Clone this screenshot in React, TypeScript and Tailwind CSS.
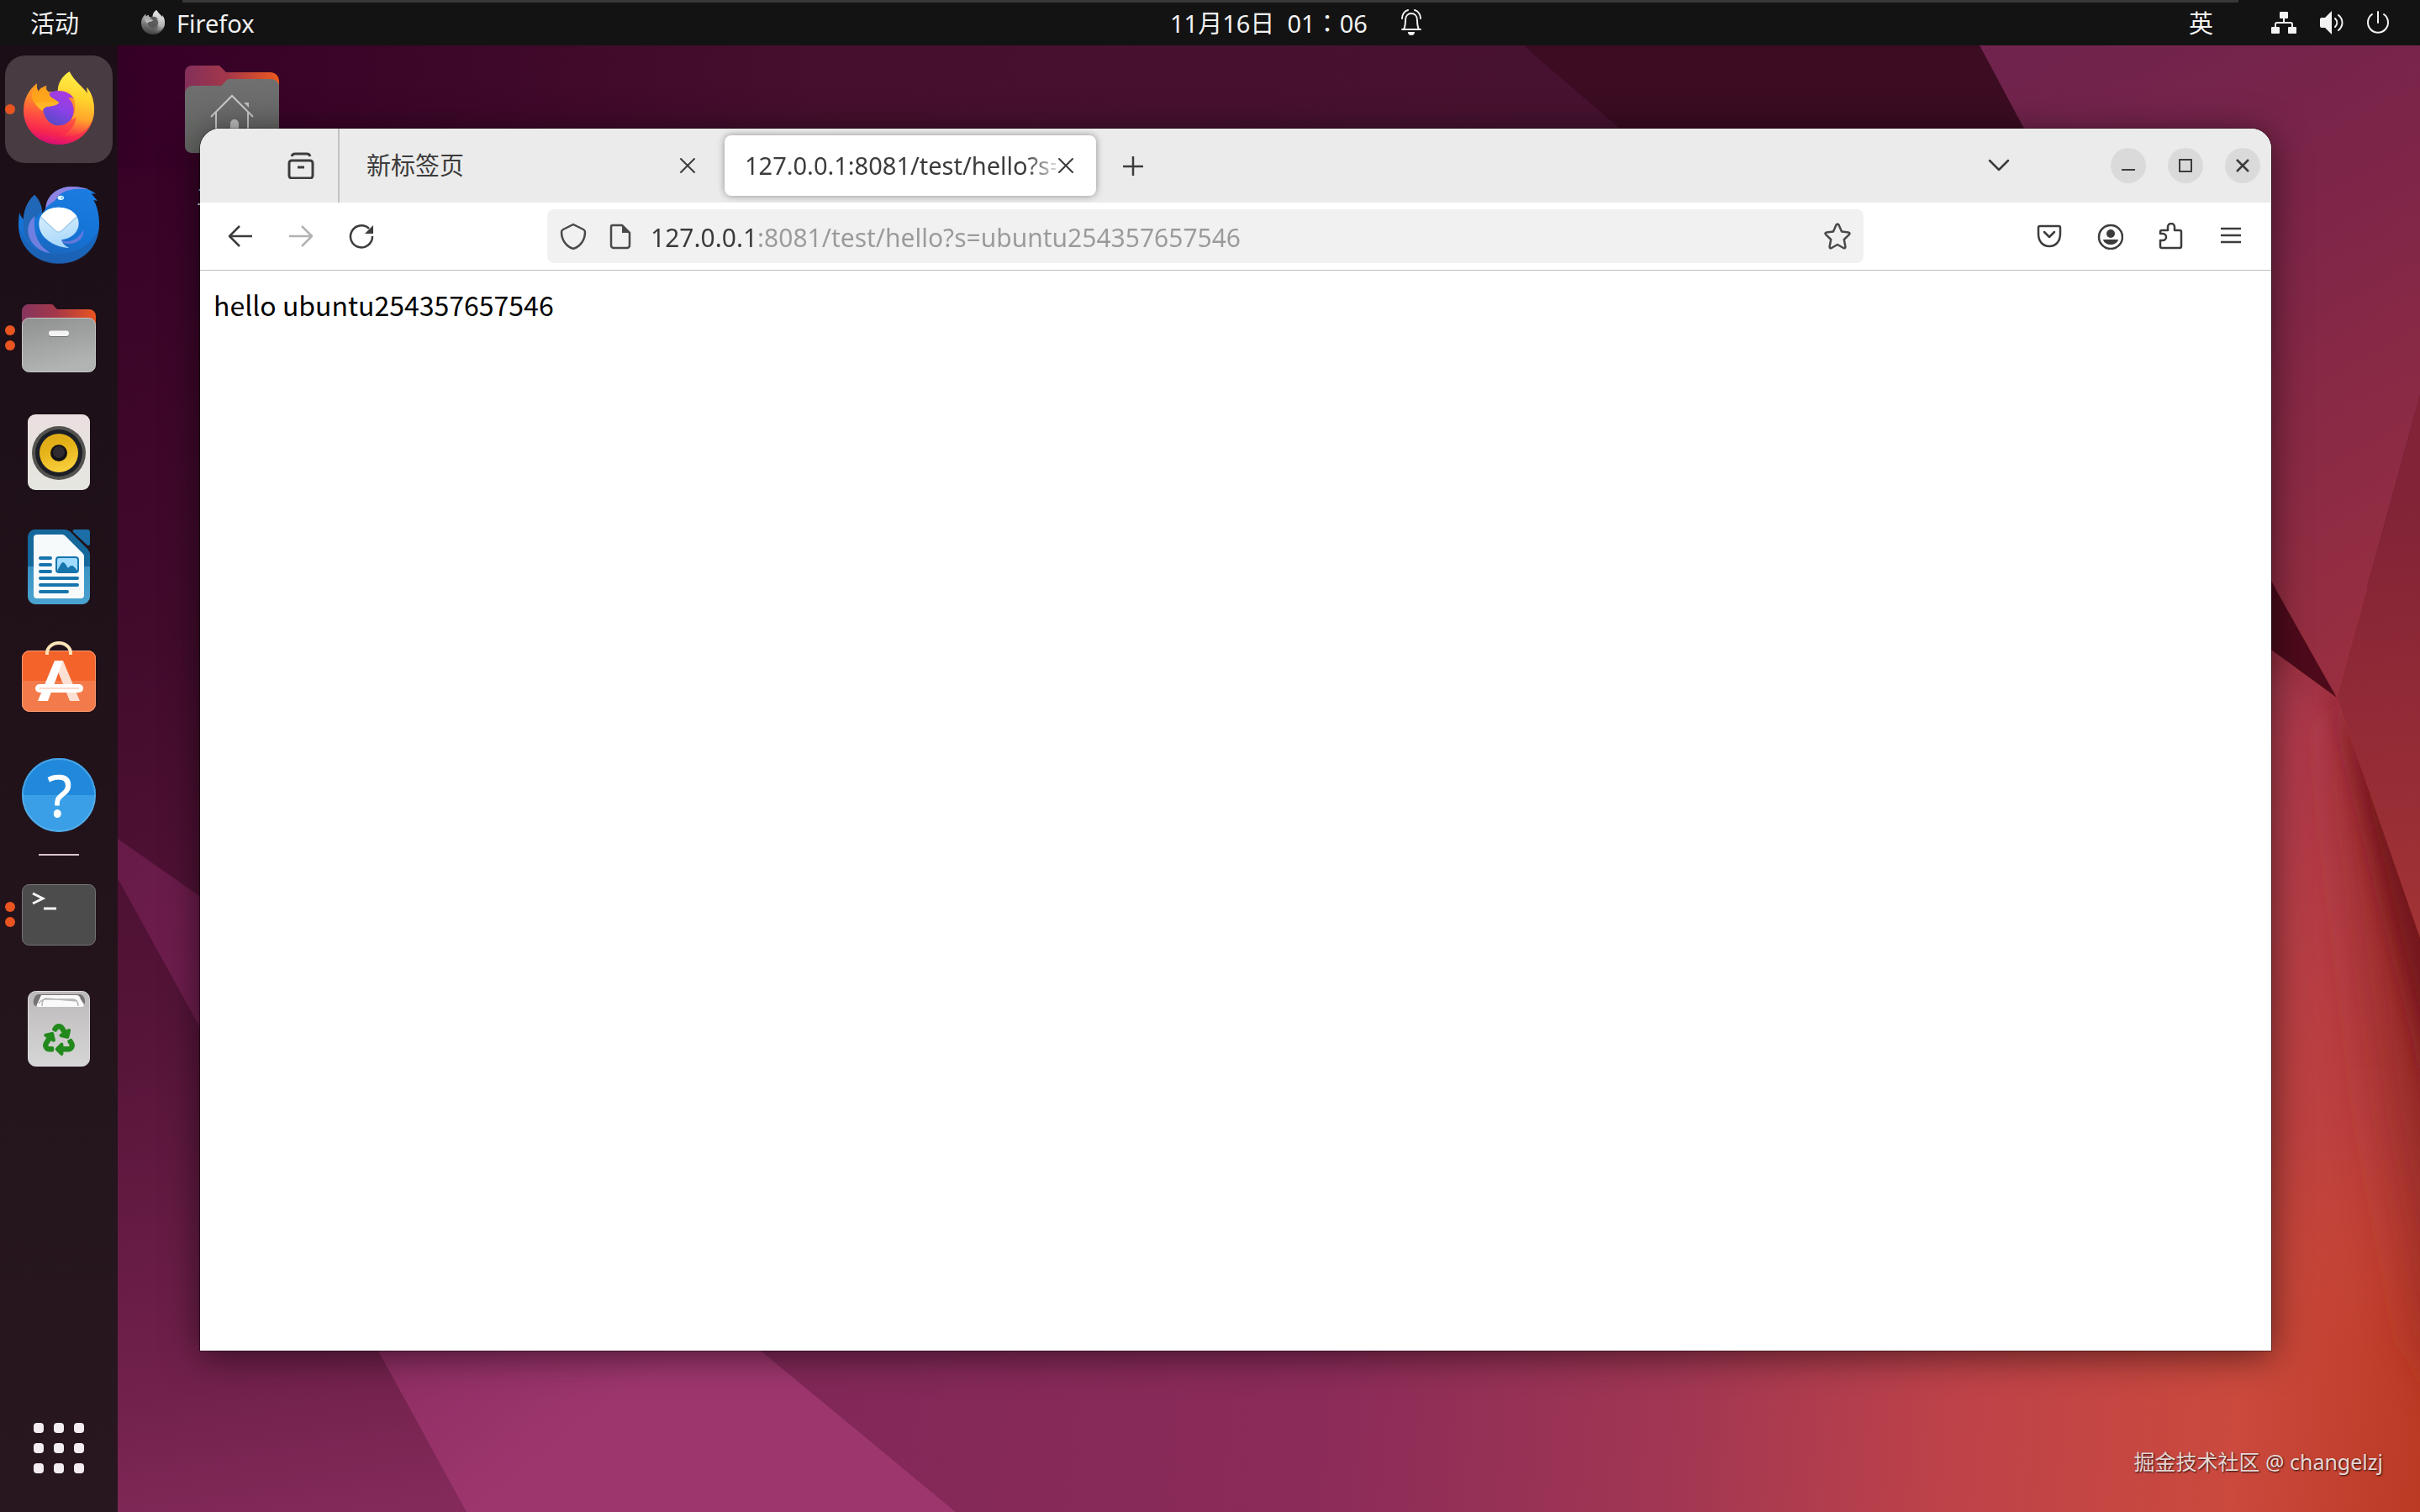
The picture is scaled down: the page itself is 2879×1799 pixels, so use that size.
import React, { useState } from 'react';
import { FaRecycle } from 'react-icons/fa';

const FirefoxLogo = ({ className, mono = false }: { className?: string; mono?: boolean }) => {
  const id = mono ? 'fx-mono' : 'fx';
  return (
    <svg viewBox="0 0 288 288" className={className} aria-hidden="true">
      <defs>
        <linearGradient id={`${id}-body`} x1="0.6" y1="0" x2="0.4" y2="1">
          <stop offset="0.1" stopColor="#ffb02a" />
          <stop offset="0.42" stopColor="#ff8a2a" />
          <stop offset="0.65" stopColor="#ff4f42" />
          <stop offset="0.85" stopColor="#f7264f" />
          <stop offset="1" stopColor="#d80c78" />
        </linearGradient>
        <linearGradient id={`${id}-flame`} x1="0.4" y1="0" x2="0.3" y2="1">
          <stop offset="0" stopColor="#fff04a" />
          <stop offset="0.4" stopColor="#ffd22c" />
          <stop offset="0.7" stopColor="#ffa52c" />
          <stop offset="1" stopColor="#ff6a35" stopOpacity="0.1" />
        </linearGradient>
        <linearGradient id={`${id}-globe`} x1="0.7" y1="0" x2="0.3" y2="1">
          <stop offset="0" stopColor="#a93be0" />
          <stop offset="0.5" stopColor="#8a41e6" />
          <stop offset="1" stopColor="#564bc4" />
        </linearGradient>
        <linearGradient id={`${id}-head`} x1="0" y1="0" x2="0.3" y2="1">
          <stop offset="0" stopColor="#ff9a1c" />
          <stop offset="1" stopColor="#ffae1a" />
        </linearGradient>
      </defs>
      <g className={mono ? 'grayscale' : undefined}>
        <path
          d="M66 52C38 72 18 108 18 148c0 70 56 122 126 122s126-54 126-124c0-34-10-62-26-80l2 22C232 66 198 44 182 10c-26 16-40 40-42 72l-34 0c-8-6-8-12-6-22-12 4-24 10-30 20-4-8-6-18-4-28z"
          fill={`url(#${id}-body)`}
        />
        <path
          d="M182 10c-26 16-42 40-42 70 30-4 50 8 58 28 8 26 4 50-10 74 10-4 14-8 18-12-4 40-30 62-62 70 80 10 126-34 126-94 0-34-10-62-26-80l2 22C232 66 198 44 182 10z"
          fill={`url(#${id}-flame)`}
        />
        <path
          d="M88 140c0-38 18-62 54-62 24 0 44 10 56 28-8-4-14-4-20-2 12 10 19 26 19 44 0 32-24 54-54 54s-55-28-55-62z"
          fill={`url(#${id}-globe)`}
        />
        <path
          d="M66 52c-12 14-18 30-18 52 6 16 18 30 38 46 2-8 8-14 18-16 22-2 36-6 41-14-8-8-20-12-30-20-4-6-6-14-9-20-8-6-8-12-6-20-12 4-24 10-30 20-4-8-6-18-4-28z"
          fill={`url(#${id}-head)`}
        />
        <path d="M60 122c24-6 50 0 84-2-8 12-24 14-42 14-12 2-16 8-18 16-10-8-18-16-24-28z" fill="#ffbe2e" opacity="0.6" />
      </g>
    </svg>
  );
};

const ThunderbirdIcon = () => (
  <svg viewBox="0 0 288 288" className="size-24" aria-hidden="true">
    <defs>
      <linearGradient id="tb-body" x1="0.6" y1="0" x2="0.4" y2="1">
        <stop offset="0" stopColor="#1b7ce0" />
        <stop offset="0.6" stopColor="#1573d6" />
        <stop offset="1" stopColor="#1c62b4" />
      </linearGradient>
      <linearGradient id="tb-mail" x1="0" y1="0" x2="0.2" y2="1">
        <stop offset="0" stopColor="#e4f4ff" />
        <stop offset="1" stopColor="#a9d8fa" />
      </linearGradient>
    </defs>
    <path
      d="M4 104c2 12 8 20 14 24 2-36 16-66 39-86 16 16 27 36 28 66l13-20c2-44 42-76 92-76 34 0 64 8 86 26l-16-1 22 26-14-3c14 24 20 54 20 86 0 82-62 140-144 140S0 230 0 148c0-18 2-34 4-44z"
      fill="url(#tb-body)"
    />
    <path d="M6 170c24 56 70 84 134 84 70 0 120-38 146-88-6 74-66 122-142 122C66 288 14 236 6 170z" fill="#1d5fae" opacity="0.55" />
    <path d="M18 128C20 92 34 62 57 42c14 12 24 34 27 64-18 8-34 26-40 50-6 22-4 42 4 64-24-22-34-52-30-92z" fill="#2167b8" />
    <path d="M58 118c-26 18-34 62-8 96 16 20 38 32 64 36-46-30-62-68-56-132z" fill="#6f7fe0" />
    <path d="M97 90c2-46 44-78 93-78 22 0 44 4 62 10-42-4-78-2-104 18-10 8-12 18-22 26-10 4-20 12-29 24z" fill="#8d83e2" />
    <ellipse cx="151" cy="52" rx="11" ry="8" fill="#eafaff" />
    <circle cx="155" cy="52" r="4" fill="#6cc3f5" />
    <path d="M140 196c30 22 70 14 92-30 2 32-22 52-58 50-14-2-26-8-34-20z" fill="#7f7be0" opacity="0.75" />
    <path d="M143 86c42 0 72 24 72 58 0 30-26 54-62 58 2 10 12 22 28 29-54-2-108-36-108-86 0-34 28-59 70-59z" fill="url(#tb-mail)" />
    <path d="M80 118c12-20 34-32 63-32s52 12 64 32l-52 50c-8 7-16 7-24 0z" fill="#fff" />
    <path d="M78 120l53 49c8 7 16 7 24 0l53-49" fill="none" stroke="#8fbfe6" strokeWidth="4" opacity="0.7" />
  </svg>
);

const FilesIcon = () => (
  <svg viewBox="0 0 96 96" className="size-24" aria-hidden="true">
    <defs>
      <linearGradient id="files-back" x1="0" y1="0" x2="1" y2="0">
        <stop offset="0" stopColor="#86355f" />
        <stop offset="0.45" stopColor="#a3374a" />
        <stop offset="1" stopColor="#ea5420" />
      </linearGradient>
      <linearGradient id="files-front" x1="0" y1="0" x2="0.3" y2="1">
        <stop offset="0" stopColor="#8f9190" />
        <stop offset="1" stopColor="#b2b4b3" />
      </linearGradient>
    </defs>
    <path d="M4 60V16a8 8 0 0 1 8-8h26c3 0 4 1 5 3l3 3h38a8 8 0 0 1 8 8v38z" fill="url(#files-back)" />
    <rect x="4.5" y="24.5" width="87" height="64" rx="8" fill="url(#files-front)" stroke="#c4c6c5" />
    <rect x="36" y="41" width="24" height="6" rx="3" fill="#6f7170" />
    <rect x="36" y="39.5" width="24" height="6.5" rx="3" fill="#f4f4f4" />
  </svg>
);

const RhythmboxIcon = () => (
  <svg viewBox="0 0 96 96" className="size-24" aria-hidden="true">
    <defs>
      <linearGradient id="rb-box" x1="0" y1="0" x2="0" y2="1">
        <stop offset="0" stopColor="#ecdfe1" />
        <stop offset="0.4" stopColor="#e6e2df" />
        <stop offset="1" stopColor="#e6e6e0" />
      </linearGradient>
      <linearGradient id="rb-cone" x1="0" y1="0" x2="0.3" y2="1">
        <stop offset="0" stopColor="#dba817" />
        <stop offset="0.5" stopColor="#e6b31a" />
        <stop offset="1" stopColor="#f7cd3a" />
      </linearGradient>
    </defs>
    <rect x="11" y="3" width="74" height="90" rx="9" fill="url(#rb-box)" />
    <circle cx="48" cy="49" r="32" fill="#55534f" />
    <circle cx="48" cy="49" r="28" fill="#1c1f26" />
    <circle cx="48" cy="49" r="23" fill="url(#rb-cone)" />
    <circle cx="48" cy="49" r="10" fill="#121212" />
    <circle cx="48" cy="48" r="7" fill="#2e2a30" />
  </svg>
);

const WriterIcon = () => (
  <svg viewBox="0 0 96 96" className="size-24" aria-hidden="true">
    <defs>
      <linearGradient id="wr-frame" x1="0" y1="0" x2="0" y2="1">
        <stop offset="0.5" stopColor="#15689c" />
        <stop offset="0.5" stopColor="#3a92c2" />
        <stop offset="1" stopColor="#4aa3d0" />
      </linearGradient>
    </defs>
    <path d="M21 4h33c4 0 6 1 9 4l18 18c3 3 4 5 4 9v49a9 9 0 0 1-9 9H20a9 9 0 0 1-9-9V13a9 9 0 0 1 10-9z" fill="url(#wr-frame)" />
    <path d="M67 4h15a3 3 0 0 1 3 3v14c0 2-2 3-4 1L65 7c-1-2 0-3 2-3z" fill="#1b6ea6" />
    <path d="M22 10h30c2 0 3 1 4 2l20 20c2 2 2 3 2 4v46a4 4 0 0 1-4 4H22a4 4 0 0 1-4-4V14a4 4 0 0 1 4-4z" fill="#f7fafb" />
    <g stroke="#1675ad" strokeWidth="4" strokeLinecap="round">
      <path d="M26 38h12M26 46h12M26 54h12M26 62h44M26 70h44M26 78h32" />
    </g>
    <rect x="45" y="37" width="26" height="18" rx="3" fill="#9fdcff" stroke="#1675ad" strokeWidth="2" />
    <path d="M46 53c3-5 5-10 7-10s4 4 6 7c2-3 4-3 5-3s4 3 6 6v2H46z" fill="#1675ad" />
  </svg>
);

const SoftwareIcon = () => (
  <svg viewBox="0 0 96 96" className="size-24" aria-hidden="true">
    <rect x="4" y="12" width="88" height="73" rx="9" fill="#f37b4b" />
    <path d="M4 48V21a9 9 0 0 1 9-9h70a9 9 0 0 1 9 9v27z" fill="#f3632a" />
    <rect x="4.5" y="12.5" width="87" height="72" rx="9" fill="none" stroke="#f79a73" />
    <path d="M34 17v-2a14 12 0 0 1 28 0v2" fill="none" stroke="#fde3b8" strokeWidth="4" />
    <path d="M53 24l20 48H61L47 37z" fill="#fde0d4" />
    <path d="M43 24h10L35 72H23z" fill="#fff" />
    <rect x="20" y="52" width="57" height="10" rx="5" fill="#fff" />
    <path d="M25 57h47" stroke="#fbd9cb" strokeWidth="2" />
  </svg>
);

const HelpIcon = () => (
  <svg viewBox="0 0 96 96" className="size-24" aria-hidden="true">
    <circle cx="48" cy="48" r="44" fill="#3a9fe6" />
    <path d="M4 48a44 44 0 0 1 88 0z" fill="#2189db" />
    <circle cx="48" cy="48" r="43" fill="none" stroke="#6bbcf0" strokeWidth="2" opacity="0.5" />
    <text x="49" y="74" textAnchor="middle" fontSize="68" fill="#fff" stroke="#fff" fontFamily="Open Sans, sans-serif">?</text>
  </svg>
);

const TerminalIcon = () => (
  <svg viewBox="0 0 96 96" className="size-24" aria-hidden="true">
    <rect x="4.5" y="12.5" width="87" height="72" rx="8" fill="#4c4c4c" stroke="#757575" />
    <path d="M17 23l12 6-12 6" fill="none" stroke="#f4f4f4" strokeWidth="3" />
    <path d="M30 41h15" stroke="#f4f4f4" strokeWidth="3" />
  </svg>
);

const TrashIcon = () => (
  <svg viewBox="0 0 96 96" className="size-24" aria-hidden="true">
    <defs>
      <linearGradient id="bin" x1="0" y1="0" x2="0" y2="1">
        <stop offset="0" stopColor="#bdb9bb" />
        <stop offset="1" stopColor="#d6d6d6" />
      </linearGradient>
    </defs>
    <rect x="11.5" y="3.5" width="73" height="89" rx="9" fill="url(#bin)" stroke="#dedcdd" />
    <path d="M24 7h49c3 0 6 4 6 8s-1 6-3 6H21c-2 0-4-3-3-7s3-7 6-7z" fill="#747274" />
    <path d="M27 8h42c3 0 4 2 5 5l4 6c0 2-1 3-3 3H24c-2 0-3-1-2-3z" fill="#fafafa" />
    <path d="M28 21c0-6 2-9 5-9l37 3M24 18c2-3 5-5 9-5h32c4 0 6 4 6 8" fill="none" stroke="#b5b5b5" strokeWidth="1.5" />
    <FaRecycle x={30} y={43} size={36} color="#228a1c" stroke="#228a1c" strokeWidth={26} overflow="visible" />
  </svg>
);

interface DockApp {
  name: string;
  icon: React.ReactNode;
  windows: number;
  active?: boolean;
}

const pinned: DockApp[] = [
  { name: 'Firefox', icon: <FirefoxLogo className="size-24" />, windows: 1, active: true },
  { name: 'Thunderbird', icon: <ThunderbirdIcon />, windows: 0 },
  { name: 'Files', icon: <FilesIcon />, windows: 2 },
  { name: 'Rhythmbox', icon: <RhythmboxIcon />, windows: 0 },
  { name: 'Writer', icon: <WriterIcon />, windows: 0 },
  { name: 'Software', icon: <SoftwareIcon />, windows: 0 },
  { name: 'Help', icon: <HelpIcon />, windows: 0 },
];

const running: DockApp[] = [
  { name: 'Terminal', icon: <TerminalIcon />, windows: 2 },
  { name: 'Trash', icon: <TrashIcon />, windows: 0 },
];

const DockItem: React.FC<{ app: DockApp }> = ({ app }) => (
  <button
    aria-label={app.name}
    className={`relative flex size-32 items-center justify-center rounded-3xl ${app.active ? 'bg-[#483c42]' : ''}`}
  >
    {app.icon}
    <span className="absolute inset-y-0 left-0 flex flex-col items-center justify-center gap-[6px]">
      {Array.from({ length: app.windows }, (_, i) => (
        <span key={i} className="size-3 rounded-full bg-[#e95420]" />
      ))}
    </span>
  </button>
);

const Dock = () => (
  <nav className="flex w-[140px] shrink-0 flex-col items-center gap-2 bg-linear-to-b from-[#1b0e16] to-[#28171f] py-3">
    {pinned.map((app) => (
      <DockItem key={app.name} app={app} />
    ))}
    <div className="-my-[2px] h-[2px] w-12 bg-[#d8c4d0]" />
    {running.map((app) => (
      <DockItem key={app.name} app={app} />
    ))}
    <button aria-label="Show applications" className="mt-auto grid size-32 grid-cols-[repeat(3,12px)] place-content-center gap-3">
      {Array.from({ length: 9 }, (_, i) => (
        <span key={i} className="size-3 rounded-[4px] bg-[#f3edf1]" />
      ))}
    </button>
  </nav>
);

const TopBar = () => (
  <header className="relative grid h-[54px] shrink-0 grid-cols-[1392px_1fr_auto] items-center bg-[#131313] text-[29px] leading-none text-[#f2f2f2]">
    <div className="absolute top-0 right-[216px] left-[217px] h-[3px] bg-[#383838]" />
    <div className="flex items-center">
      <button className="ml-9 w-[58px] whitespace-nowrap">活动</button>
      <button className="ml-[72px] flex items-center gap-3">
        <FirefoxLogo mono className="size-8" />
        Firefox
      </button>
    </div>
    <div className="flex items-center">
      <button className="whitespace-pre">
        11月16日  01<span className="font-['Noto_Sans_CJK_TC',sans-serif]">：</span>06
      </button>
      <svg viewBox="0 0 24 32" className="ml-10 h-8 w-6" fill="none" stroke="#f2f2f2" strokeWidth="2" strokeLinecap="round" aria-hidden="true">
        <path d="M3 24c2-4 2-7 2-11 0-5 3-8 7-8s7 3 7 8c0 4 0 7 2 11zM1 24h22" />
        <path d="M8 1C4 2 1 6 1 11M16 1c4 1 7 5 7 10" />
        <path d="M8 27h8a4 4 0 0 1-8 0z" fill="#f2f2f2" stroke="none" />
      </svg>
    </div>
    <div className="flex items-center pr-[34px]">
      <button className="mr-[68px]">英</button>
      <button aria-label="System menu" className="flex items-center gap-6">
        <svg viewBox="0 0 32 32" className="size-8" fill="#f2f2f2" aria-hidden="true">
          <rect x="11" y="3" width="10" height="8" rx="1" />
          <rect x="1" y="21" width="10" height="8" rx="1" />
          <rect x="21" y="21" width="10" height="8" rx="1" />
          <path d="M16 10v6M6 22v-4a2 2 0 0 1 2-2h16a2 2 0 0 1 2 2v4" fill="none" stroke="#f2f2f2" strokeWidth="2" />
        </svg>
        <svg viewBox="0 0 32 32" className="size-8" fill="#f2f2f2" aria-hidden="true">
          <path d="M5 10h4l8-8v28l-8-8H5a2 2 0 0 1-2-2v-8a2 2 0 0 1 2-2z" />
          <path d="M21 11c3 3 3 7 0 10M25 7c6 5 6 13 0 18" fill="none" stroke="#f2f2f2" strokeWidth="2" strokeLinecap="round" />
        </svg>
        <svg viewBox="0 0 32 32" className="size-8" fill="none" stroke="#f2f2f2" strokeWidth="2" strokeLinecap="round" aria-hidden="true">
          <path d="M16 3v13M9 6a12 12 0 1 0 14 0" />
        </svg>
      </button>
    </div>
  </header>
);

const Wallpaper = () => (
  <svg viewBox="140 54 2739 1745" preserveAspectRatio="none" className="absolute inset-0 size-full" aria-hidden="true">
    <defs>
      <linearGradient id="wp-left" gradientUnits="userSpaceOnUse" x1="140" y1="54" x2="440" y2="1799">
        <stop offset="0" stopColor="#350026" />
        <stop offset="0.4" stopColor="#420b2c" />
        <stop offset="0.65" stopColor="#551438" />
        <stop offset="0.9" stopColor="#72214c" />
        <stop offset="1" stopColor="#832a5a" />
      </linearGradient>
      <linearGradient id="wp-top" gradientUnits="userSpaceOnUse" x1="140" y1="0" x2="1820" y2="0">
        <stop offset="0" stopColor="#350026" />
        <stop offset="0.5" stopColor="#460f2d" />
        <stop offset="1" stopColor="#47122f" />
      </linearGradient>
      <linearGradient id="wp-band" gradientUnits="userSpaceOnUse" x1="140" y1="1000" x2="700" y2="1700">
        <stop offset="0" stopColor="#671a47" />
        <stop offset="0.3" stopColor="#711f50" />
        <stop offset="1" stopColor="#9e366e" />
      </linearGradient>
      <linearGradient id="wp-bottom" gradientUnits="userSpaceOnUse" x1="1000" y1="1607" x2="2879" y2="1799">
        <stop offset="0" stopColor="#822858" />
        <stop offset="0.3" stopColor="#8b2b59" />
        <stop offset="0.52" stopColor="#a03653" />
        <stop offset="0.7" stopColor="#bd4249" />
        <stop offset="0.88" stopColor="#cb493d" />
        <stop offset="1" stopColor="#bb3a24" />
      </linearGradient>
      <linearGradient id="wp-upper-right" gradientUnits="userSpaceOnUse" x1="2380" y1="100" x2="2780" y2="830">
        <stop offset="0" stopColor="#70234c" />
        <stop offset="0.35" stopColor="#7d2549" />
        <stop offset="1" stopColor="#992f40" />
      </linearGradient>
      <linearGradient id="wp-right" gradientUnits="userSpaceOnUse" x1="2820" y1="600" x2="2879" y2="1116">
        <stop offset="0" stopColor="#822337" />
        <stop offset="1" stopColor="#a23335" />
      </linearGradient>
      <linearGradient id="wp-lower" gradientUnits="userSpaceOnUse" x1="2740" y1="780" x2="2740" y2="1600">
        <stop offset="0" stopColor="#9f364a" />
        <stop offset="0.12" stopColor="#b03b4d" />
        <stop offset="0.5" stopColor="#b83f44" />
        <stop offset="0.7" stopColor="#bd413f" />
        <stop offset="1" stopColor="#c5453b" stopOpacity="0" />
      </linearGradient>
      <filter id="soft" x="-1" y="-0.5" width="3" height="2">
        <feGaussianBlur stdDeviation="14" />
      </filter>
      <filter id="softer" x="-2" y="-0.5" width="5" height="2">
        <feGaussianBlur stdDeviation="34" />
      </filter>
      <clipPath id="below-fold">
        <path d="M2600 699L2780 830L2879 1116V1799H2600z" />
      </clipPath>
    </defs>
    <path d="M140 54H2879V1799H140z" fill="url(#wp-left)" />
    <path d="M140 54H1813L1927 153V200H140z" fill="url(#wp-top)" />
    <path d="M1813 54H2600V200H1981z" fill="#3b0c22" />
    <path d="M140 998L400 1180L905 1607L1137 1799H555L450 1607L140 1045z" fill="url(#wp-band)" />
    <path d="M905 1607L1137 1799H2879V700H905z" fill="url(#wp-bottom)" />
    <path d="M2355 54H2879V470L2780 830L2600 510L2408 153z" fill="url(#wp-upper-right)" />
    <path d="M2879 470L2780 830L2879 1116z" fill="url(#wp-right)" />
    <g clipPath="url(#below-fold)">
      <path d="M2600 699L2780 830L2879 1116V1600H2600z" fill="url(#wp-lower)" />
      <path d="M2780 830L2980 1116V1700L2890 1600L2840 1330z" fill="#8e2522" opacity="0.85" filter="url(#softer)" />
      <path d="M2774 810L2910 1080V1360L2850 1120z" fill="#74161d" filter="url(#soft)" />
      <path d="M2600 699L2780 830L2600 716z" fill="#74161d" opacity="0.8" filter="url(#soft)" />
    </g>
    <path d="M2600 510L2780 830L2600 699z" fill="#4d0a1b" />
  </svg>
);

const HomeFolder = () => (
  <button className="absolute top-6 left-20 flex flex-col items-center gap-9 text-[28px] leading-none text-white">
    <svg viewBox="0 0 112 104" className="h-[104px] w-28" aria-hidden="true">
      <defs>
        <linearGradient id="home-back" x1="0" y1="0" x2="1" y2="0">
          <stop offset="0" stopColor="#84305a" />
          <stop offset="0.45" stopColor="#a3374a" />
          <stop offset="1" stopColor="#ef5a1c" />
        </linearGradient>
        <linearGradient id="home-front" x1="0" y1="0" x2="0" y2="1">
          <stop offset="0" stopColor="#6f706f" />
          <stop offset="1" stopColor="#636563" />
        </linearGradient>
      </defs>
      <path d="M0 40V8a8 8 0 0 1 8-8h33l8 8h53a10 10 0 0 1 10 10v22z" fill="url(#home-back)" />
      <path d="M0 96V33a9 9 0 0 1 9-9h34l7-7q1-1 3-1h50a9 9 0 0 1 9 9v71a8 8 0 0 1-8 8H8a8 8 0 0 1-8-8z" fill="url(#home-front)" />
      <path d="M31 61l25-25 25 25M37 56v30h38V56" fill="none" stroke="#c9c9c9" strokeWidth="2" />
      <path d="M54 86V69a5 5 0 0 1 10 0v17zM70 44h6v6z" fill="#c0c0c0" />
    </svg>
    主目录
  </button>
);

const CloseGlyph = () => (
  <svg viewBox="0 0 24 24" className="size-6" fill="none" stroke="#3c3c3c" strokeWidth="2" strokeLinecap="round" aria-hidden="true">
    <path d="M4 4l16 16M20 4L4 20" />
  </svg>
);

interface ToolButtonProps {
  label: string;
  disabled?: boolean;
  children: React.ReactNode;
}

const ToolButton: React.FC<ToolButtonProps> = ({ label, disabled, children }) => (
  <button aria-label={label} disabled={disabled} className="flex size-16 shrink-0 items-center justify-center text-[#3c3c3c] disabled:text-[#b2b2b2]">
    <svg viewBox="0 0 32 32" className="size-8" fill="none" stroke="currentColor" strokeWidth="2.5" strokeLinecap="round" strokeLinejoin="round" aria-hidden="true">
      {children}
    </svg>
  </button>
);

const TabBar = () => (
  <div className="flex h-[88px] shrink-0 items-center bg-[#ebebeb] text-[29px] leading-10 text-[#3c3c3c]">
    <div className="flex h-full w-[166px] shrink-0 items-center justify-end border-r-2 border-[#c2c2c2] pr-3">
      <ToolButton label="Firefox View">
        <rect x="2" y="10" width="28" height="21" rx="3" strokeWidth="3" />
        <path d="M12 18h8" strokeWidth="3" strokeLinecap="butt" />
        <path d="M5 5q1-3 4-3h14q3 0 4 3" strokeWidth="3" strokeLinecap="butt" />
      </ToolButton>
    </div>
    <div className="ml-2 flex h-[72px] w-[442px] items-center justify-between rounded-lg px-6">
      <span>新标签页</span>
      <button aria-label="Close tab"><CloseGlyph /></button>
    </div>
    <div className="ml-2 flex h-[72px] w-[442px] items-center rounded-lg bg-white px-6 shadow-[0_0_8px_rgba(0,0,0,0.4)]">
      <span className="min-w-0 flex-1 whitespace-nowrap [mask-image:linear-gradient(to_right,#000_calc(100%-36px),rgba(0,0,0,0.2))]">
        127.0.0.1:8081/test/hello?s=
      </span>
      <button aria-label="Close tab"><CloseGlyph /></button>
    </div>
    <div className="ml-3">
      <ToolButton label="New tab">
        <path d="M16 5v23M4 17h24" strokeLinecap="butt" />
      </ToolButton>
    </div>
    <div className="mr-[101px] ml-auto">
      <ToolButton label="List all tabs">
        <path d="M5 10l11 11 11-11" />
      </ToolButton>
    </div>
    <div className="flex gap-[26px] pr-[13px]">
      <button aria-label="Minimize" className="flex size-[42px] items-center justify-center rounded-full bg-[#dadada]">
        <svg viewBox="0 0 24 24" className="size-6" stroke="#3c3c3c" strokeWidth="2"><path d="M4 17h16" /></svg>
      </button>
      <button aria-label="Maximize" className="flex size-[42px] items-center justify-center rounded-full bg-[#dadada]">
        <svg viewBox="0 0 24 24" className="size-6" fill="none" stroke="#3c3c3c" strokeWidth="2"><path d="M5 5h14v14H5z" /></svg>
      </button>
      <button aria-label="Close" className="flex size-[42px] items-center justify-center rounded-full bg-[#dadada]">
        <svg viewBox="0 0 24 24" className="size-6" stroke="#3c3c3c" strokeWidth="2.5"><path d="M5 5l14 14M19 5L5 19" /></svg>
      </button>
    </div>
  </div>
);

const NavBar = () => {
  const [url, setUrl] = useState('127.0.0.1:8081/test/hello?s=ubuntu254357657546');

  return (
    <div className="flex h-[81px] shrink-0 items-center gap-2 border-b border-[#bdbdbd] bg-white px-4">
      <ToolButton label="Back">
        <path d="M15 4L3 16l12 12M3 16h27" strokeLinecap="butt" />
      </ToolButton>
      <ToolButton label="Forward" disabled>
        <path d="M17 4l12 12-12 12M29 16H2" strokeLinecap="butt" />
      </ToolButton>
      <ToolButton label="Reload">
        <path d="M25 7a13 13 0 1 0 4 9" strokeLinecap="butt" />
        <path d="M30 3v10H20z" fill="currentColor" stroke="none" />
      </ToolButton>
      <div className="mx-[181px] flex h-16 flex-1 items-center rounded-lg bg-[#f1f1f1] px-[15px] text-[#4a4a4a]">
        <svg viewBox="0 0 32 32" className="size-8 shrink-0" fill="none" stroke="currentColor" strokeWidth="2.5" strokeLinejoin="round" aria-hidden="true">
          <path d="M16 2L28 8q2 1 2 3c0 9-5 17-14 20C7 28 2 20 2 11q0-2 2-3z" />
        </svg>
        <svg viewBox="0 0 32 32" className="ml-6 size-8 shrink-0" fill="none" stroke="currentColor" strokeWidth="2.5" strokeLinejoin="round" aria-hidden="true">
          <path d="M7 3h11l9 9v15a3 3 0 0 1-3 3H8a3 3 0 0 1-3-3V5a2 2 0 0 1 2-2z" />
          <path d="M18 3v9h9z" fill="currentColor" stroke="none" />
        </svg>
        <input
          aria-label="Address"
          value={url}
          onChange={(e) => setUrl(e.target.value)}
          className="ml-5 h-11 min-w-0 flex-1 bg-[linear-gradient(90deg,#3a3a3a_125px,#9a9a9a_125px)] bg-clip-text pt-[2px] text-[30px] leading-10 text-transparent caret-black outline-none"
        />
        <button aria-label="Bookmark">
          <svg viewBox="0 0 32 32" className="size-8" fill="none" stroke="currentColor" strokeWidth="2.5" strokeLinejoin="round" aria-hidden="true">
            <path d="M14.5 2.5q1.5-2 3 0l3.5 8 8 1q2.5.5.8 2.6l-6 5.9 1.6 8.5q0 2.5-2.4 1.500L16 26l-7 4q-2.4 1-2.4-1.500L8.200 20l-6-5.900Q.5 12 3 11.500l8-1z" />
          </svg>
        </button>
      </div>
      <ToolButton label="Pocket">
        <path d="M5 4h22q2 0 2 2v7c0 9-5 15-13 15S3 22 3 13V6q0-2 2-2z" />
        <path d="M10 11l6 6 6-6" />
      </ToolButton>
      <ToolButton label="Account">
        <circle cx="17" cy="17" r="14" />
        <circle cx="17" cy="13" r="5" fill="currentColor" stroke="none" />
        <path d="M8 20h18c-1 4-5 6-9 6s-8-2-9-6z" fill="currentColor" stroke="none" />
      </ToolButton>
      <ToolButton label="Extensions">
        <path d="M6 30q-2 0-2-2v-7h3a4 4 0 0 0 0-8H4v-2q0-2 2-2h7V5a4 4 0 0 1 8 0v4h6q2 0 2 2v17q0 2-2 2z" />
      </ToolButton>
      <ToolButton label="Menu">
        <path d="M4 7h24M4 15h24M4 23h24" strokeLinecap="butt" />
      </ToolButton>
    </div>
  );
};

const BrowserWindow = () => (
  <section className="absolute top-[99px] right-[177px] bottom-[192px] left-[98px] flex flex-col overflow-hidden rounded-t-3xl bg-white shadow-[0_0_0_1px_rgba(0,0,0,0.35),0_6px_44px_rgba(0,0,0,0.55)]">
    <TabBar />
    <NavBar />
    <main className="flex-1 p-4 font-['Noto_Sans_CJK_SC',sans-serif] text-[32px] leading-[48px] text-black">
      hello ubuntu254357657546
    </main>
  </section>
);

export default function App() {
  return (
    <div className="flex h-screen flex-col overflow-hidden font-['Noto_Sans','Noto_Sans_CJK_SC',sans-serif]">
      <TopBar />
      <div className="flex min-h-0 flex-1">
        <Dock />
        <div className="relative flex-1 overflow-hidden">
          <Wallpaper />
          <HomeFolder />
          <BrowserWindow />
          <p className="absolute right-11 bottom-10 text-[25px] leading-10 text-[#e6d6d4] [text-shadow:1px_1px_2px_rgba(0,0,0,0.8)]">
            掘金技术社区 @ changelzj
          </p>
        </div>
      </div>
    </div>
  );
}
